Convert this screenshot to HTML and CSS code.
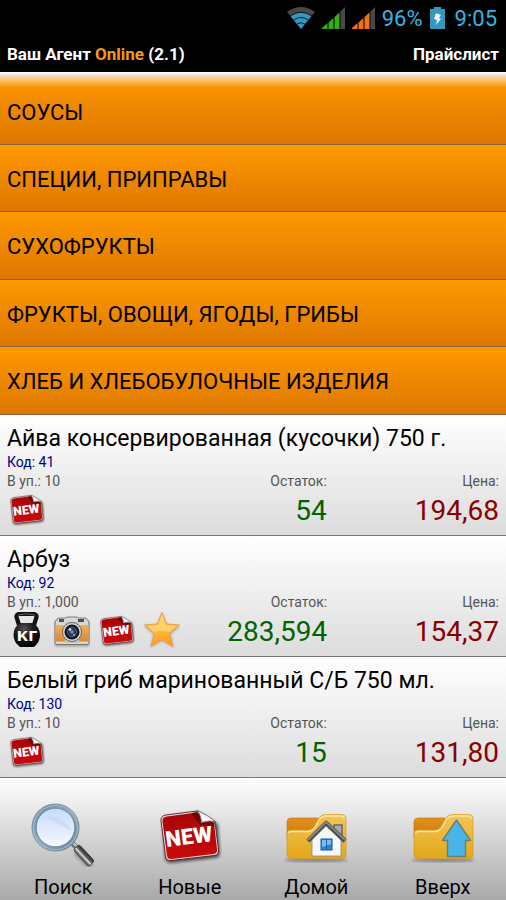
FILE: index.html
```html
<!DOCTYPE html>
<html lang="ru">
<head>
<meta charset="utf-8">
<meta name="viewport" content="width=device-width, initial-scale=1">
<title>Прайслист</title>
<link rel="stylesheet" href="styles.css">
</head>
<body>
<svg class="defs" aria-hidden="true">
  <defs>
    <linearGradient id="red" x1="0" y1="0" x2="0" y2="1"><stop offset="0" stop-color="#a80508"/><stop offset="1" stop-color="#c90a0c"/></linearGradient>
    <linearGradient id="peel" x1="0" y1="1" x2="1" y2="0"><stop offset="0" stop-color="#8d8d8d"/><stop offset=".35" stop-color="#fff"/><stop offset="1" stop-color="#aaa"/></linearGradient>
    <linearGradient id="gold" x1="0" y1="0" x2="0" y2="1"><stop offset="0" stop-color="#f4c557"/><stop offset="1" stop-color="#e3a618"/></linearGradient>
    <linearGradient id="tab" x1="0" y1="0" x2="0" y2="1"><stop offset="0" stop-color="#e0921f"/><stop offset="1" stop-color="#cf7608"/></linearGradient>
    <linearGradient id="starfill" x1="0" y1="0" x2="0" y2="1"><stop offset="0" stop-color="#ffd45c"/><stop offset="1" stop-color="#ff9c1c"/></linearGradient>
    <linearGradient id="ring" x1="0" y1="0" x2="1" y2="1"><stop offset="0" stop-color="#6e8da2"/><stop offset=".5" stop-color="#8fa8b8"/><stop offset="1" stop-color="#6a8191"/></linearGradient>
    <linearGradient id="glass" x1="0" y1="0" x2="0" y2="1"><stop offset="0" stop-color="#c3d9f9"/><stop offset=".5" stop-color="#dfe9fe"/><stop offset="1" stop-color="#f8faff"/></linearGradient>
    <linearGradient id="grip" x1="0" y1="0" x2="0" y2="1"><stop offset="0" stop-color="#2b2b2b"/><stop offset=".45" stop-color="#666"/><stop offset=".6" stop-color="#ddd"/><stop offset="1" stop-color="#444"/></linearGradient>
    <linearGradient id="leather" x1="0" y1="0" x2="0" y2="1"><stop offset="0" stop-color="#f0ad59"/><stop offset="1" stop-color="#d88a35"/></linearGradient>
    <radialGradient id="iron" cx=".4" cy=".25" r=".7"><stop offset="0" stop-color="#555"/><stop offset=".5" stop-color="#1c1c1c"/><stop offset="1" stop-color="#050505"/></radialGradient>
    <radialGradient id="lens"><stop offset="0" stop-color="#8aa6cc"/><stop offset=".35" stop-color="#273a5e"/><stop offset="1" stop-color="#0b0d15"/></radialGradient>
    <filter id="soft" x="-20%" y="-20%" width="140%" height="140%"><feGaussianBlur stdDeviation="1.6"/></filter>
  </defs>
  <symbol id="i-new" viewBox="0 0 64 64">
    <path d="M8 13 L41 9 L60 21 L62 50 Q62 54 58 55 L14 60 Q8 60 7 56 L4 18Z" fill="#000" opacity=".6" filter="url(#soft)"/>
    <path d="M8 12 L39 8 L57 19 L60.500 47 Q61 52 56 52.500 L13 57.500 Q8 58 7.500 53 L3 18 Q2.500 12.500 8 12Z" fill="#e8d5d5" stroke="#4a1010" stroke-width=".8"/>
    <path d="M9 13.500 L39 9.500 L56 20 L59 46.500 Q59.500 50.500 55.500 51 L13.500 56 Q9.500 56.500 9 52.500 L4.500 18.500 Q4 14 9 13.500Z" fill="url(#red)"/>
    <path d="M33 10.500 L39 8 L46 20 L57 19 L56 24 L42 22Z" fill="#400" opacity=".55"/>
    <text class="new-text" x="31" y="41" text-anchor="middle" transform="rotate(-7 32 34)">NEW</text>
    <path d="M39.500 7.500 Q44 15 43 20 Q50 17 57.500 18.500 Q50 12 39.500 7.500Z" fill="url(#peel)" stroke="#555" stroke-width=".7"/>
  </symbol>
  <symbol id="i-folder" viewBox="0 0 64 64">
    <ellipse cx="32" cy="57" rx="32" ry="2" fill="#000" opacity=".35" filter="url(#soft)"/>
    <path d="M3 19 Q3 15 7 15 L34 15 L34 35 L3 35Z" fill="url(#tab)" stroke="#bd7412" stroke-width=".6"/>
    <path d="M3 30 Q3 27 7 27 L24 27 Q28 27 31 22 L34 16 Q37 11.500 42 11.500 L57 11.500 Q62 11.500 62 16 L62 51 Q62 55.500 57 55.500 L8 55.500 Q3 55.500 3 51Z" fill="url(#gold)" stroke="#d69a20" stroke-width=".7"/>
    <path d="M4.500 30 Q5 28.500 8 28.500 L24 28.500 Q29 28.500 32 23 L35 17 Q38 13 42 13 L57 13 Q60 13 60.500 16" fill="none" stroke="#fbe3a0" stroke-width="1.300"/>
  </symbol>
  <symbol id="i-search" viewBox="0 0 64 64">
    <path d="M45 49 L60 64" stroke="#000" stroke-width="6" opacity=".3" filter="url(#soft)"/>
    <path d="M39 38 L47 46" stroke="#5e7180" stroke-width="5"/>
    <path d="M40 38 L47 45" stroke="#bdcbd5" stroke-width="2"/>
    <rect x="0" y="-4" width="23" height="8" rx="2.500" fill="url(#grip)" stroke="#333" stroke-width=".7" transform="translate(45 44) rotate(47)"/>
    <circle cx="24.500" cy="24.500" r="21.500" fill="url(#glass)" stroke="url(#ring)" stroke-width="5"/>
    <circle cx="24.500" cy="24.500" r="22" fill="none" stroke="#a3bac8" stroke-width="1.200"/>
    <circle cx="24.500" cy="24.500" r="19.300" fill="none" stroke="#718aa0" stroke-width=".8"/>
    <path d="M10 16 Q20 11 30 17 T41 28 Q32 24 24 19 T10 16Z" fill="#a9c6f0" opacity=".3"/>
  </symbol>
  <symbol id="i-home" viewBox="0 0 64 64">
    <use href="#i-folder" width="64" height="64"/>
    <path d="M50 22 h8 v10 h-8z" fill="#aaa" stroke="#666" stroke-width="1.500"/>
    <path d="M28 35 L42 21 L57 35 V53 H28Z" fill="#f7f7f7" stroke="#888" stroke-width=".8"/>
    <path d="M24 38 L42 20 L61 38" fill="none" stroke="#505050" stroke-width="4.500" stroke-linejoin="round"/>
    <path d="M24 37 L42 19 L61 37" fill="none" stroke="#929292" stroke-width="1.500"/>
    <rect x="37" y="36" width="11" height="11" fill="#2c83d4" stroke="#175a9d"/>
    <path d="M38 37 h9 v4 l-9 3z" fill="#7cbdf2"/>
    <path d="M42.500 36 V47" stroke="#1b63a9"/>
  </symbol>
  <symbol id="i-up" viewBox="0 0 64 64">
    <use href="#i-folder" width="64" height="64"/>
    <path d="M45.500 17 L59.500 37.500 H54.500 V53.500 H36.500 V37.500 H31.500Z" fill="#49b5e6" stroke="#647f77" stroke-width="1.400" stroke-linejoin="round"/>
  </symbol>
  <symbol id="i-weight" viewBox="0 0 36 36">
    <path d="M10 13 L7.500 5 Q7 2 11 2 H24 Q28 2 27.500 5 L25 13" fill="none" stroke="#111" stroke-width="4.200" stroke-linejoin="round"/>
    <path d="M9 3 Q17 .5 26 3" fill="none" stroke="#777" stroke-width=".8"/>
    <path d="M11 11 H24 Q31 15 31 23 Q31 30 25 35 H11 Q4.500 30 4.500 23 Q4.500 15 11 11Z" fill="url(#iron)"/>
    <text class="kg-text" x="18" y="29" text-anchor="middle">КГ</text>
  </symbol>
  <symbol id="i-camera" viewBox="0 0 36 36">
    <path d="M1 9 H35 V34 H1Z" fill="#000" opacity=".35" filter="url(#soft)"/>
    <path d="M1 10 L4 6 H12 L13 5 H23 L24 6 H32 L35 10 V31 Q35 32.500 33 32.500 H3 Q1 32.500 1 31Z" fill="#d9d8d4" stroke="#66615a" stroke-width=".8"/>
    <rect x="1.500" y="13" width="33" height="16.500" fill="url(#leather)"/>
    <path d="M11 10 H25 V31 H11Z" fill="#c3c3c3"/>
    <rect x="5" y="7" width="5" height="3" fill="#4c5657"/><rect x="24" y="7" width="6" height="3" fill="#46504f"/>
    <circle cx="18" cy="20" r="9.500" fill="#d9d9d9" stroke="#646464"/>
    <circle cx="18" cy="20" r="7.500" fill="url(#lens)"/>
    <circle cx="18" cy="20" r="4.500" fill="none" stroke="#577599" stroke-width=".8"/>
    <circle cx="16" cy="17.500" r="1.300" fill="#dbeaff"/><circle cx="20" cy="23" r="1" fill="#d69ab9"/>
  </symbol>
  <symbol id="i-star" viewBox="0 0 36 36">
    <path d="M18 1 L22.500 13 L36 14 L26 22.500 L29.500 35 L18 28.500 L6.500 35 L10 22.500 L0 14 L13.500 13Z" fill="#000" opacity=".3" filter="url(#soft)"/>
    <path d="M18 0.500 L22.500 12 L35.500 13 L25.500 21.500 L29 34.500 L18 27.500 L7 34.500 L10.500 21.500 L.5 13 L13.500 12Z" fill="url(#starfill)" stroke="#e9a046" stroke-linejoin="round"/>
    <path d="M18 3 L21.500 13 L33 14 L25 20 Q15 17 10 21 L3 14 L14.500 13Z" fill="#ffe9a0" opacity=".45"/>
  </symbol>
</svg>

<div class="screen">
  <div class="status">
    <svg class="wifi" viewBox="0 0 28 22" aria-hidden="true">
      <path d="M14 22 L0 5 Q14 -5 28 5Z" fill="#484848"/>
      <path d="M14 22 L3.500 9 Q14 2 24.500 9Z" fill="#3398bf"/>
      <path d="M3 9 Q14 1.500 25 9 M6.500 13 Q14 8 21.500 13 M10 17 Q14 14.500 18 17" fill="none" stroke="#000" stroke-width=".8"/>
    </svg>
    <svg class="signal green" viewBox="0 0 23 22" aria-hidden="true">
      <path d="M0 22 V21 L5.500 16 V22Z M6.500 22 V15.500 L11.500 11 V22Z M12.500 22 V10 L17.500 5.500 V22Z"/>
      <path class="off" d="M18.500 22 V4.500 L23 0 V22Z"/>
    </svg>
    <svg class="signal orange" viewBox="0 0 23 22" aria-hidden="true">
      <path d="M0 22 V21 L5.500 16 V22Z M6.500 22 V15.500 L11.500 11 V22Z M12.500 22 V10 L17.500 5.500 V22Z"/>
      <path class="off" d="M18.500 22 V4.500 L23 0 V22Z"/>
    </svg>
    <span>96%</span>
    <svg class="battery" viewBox="0 0 15 22" aria-hidden="true">
      <path d="M4 0 H11 V2 H15 V22 H0 V2 H4Z" fill="#3398bf"/>
      <path d="M6 6 L11 8 L9 11 L11 12 L6 18 L7 13 L4 12Z" fill="#e9f6fb"/>
    </svg>
    <time>9:05</time>
  </div>
  <header class="titlebar">
    <h1>Ваш Агент <span class="accent">Online</span> (2.1)</h1>
    <strong>Прайслист</strong>
  </header>

  <main>
    <nav class="categories" aria-label="Категории">
      <button type="button">СОУСЫ</button>
      <button type="button">СПЕЦИИ, ПРИПРАВЫ</button>
      <button type="button">СУХОФРУКТЫ</button>
      <button type="button">ФРУКТЫ, ОВОЩИ, ЯГОДЫ, ГРИБЫ</button>
      <button type="button">ХЛЕБ И ХЛЕБОБУЛОЧНЫЕ ИЗДЕЛИЯ</button>
    </nav>

    <article class="item">
      <h2>Айва консервированная (кусочки) 750 г.</h2>
      <p class="code">Код: 41</p>
      <div class="details">
        <div class="info">
          <p>В уп.: 10</p>
          <div class="icons"><svg aria-hidden="true"><use href="#i-new"/></svg></div>
        </div>
        <dl class="stock"><dt>Остаток:</dt><dd>54</dd></dl>
        <dl class="price"><dt>Цена:</dt><dd>194,68</dd></dl>
      </div>
    </article>

    <article class="item">
      <h2>Арбуз</h2>
      <p class="code">Код: 92</p>
      <div class="details">
        <div class="info">
          <p>В уп.: 1,000</p>
          <div class="icons">
            <svg aria-hidden="true"><use href="#i-weight"/></svg>
            <svg aria-hidden="true"><use href="#i-camera"/></svg>
            <svg aria-hidden="true"><use href="#i-new"/></svg>
            <svg aria-hidden="true"><use href="#i-star"/></svg>
          </div>
        </div>
        <dl class="stock"><dt>Остаток:</dt><dd>283,594</dd></dl>
        <dl class="price"><dt>Цена:</dt><dd>154,37</dd></dl>
      </div>
    </article>

    <article class="item">
      <h2>Белый гриб маринованный С/Б 750 мл.</h2>
      <p class="code">Код: 130</p>
      <div class="details">
        <div class="info">
          <p>В уп.: 10</p>
          <div class="icons"><svg aria-hidden="true"><use href="#i-new"/></svg></div>
        </div>
        <dl class="stock"><dt>Остаток:</dt><dd>15</dd></dl>
        <dl class="price"><dt>Цена:</dt><dd>131,80</dd></dl>
      </div>
    </article>
  </main>

  <footer class="toolbar">
    <button type="button"><svg aria-hidden="true"><use href="#i-search"/></svg>Поиск</button>
    <button type="button"><svg aria-hidden="true"><use href="#i-new"/></svg>Новые</button>
    <button type="button"><svg aria-hidden="true"><use href="#i-home"/></svg>Домой</button>
    <button type="button"><svg aria-hidden="true"><use href="#i-up"/></svg>Вверх</button>
  </footer>
</div>
</body>
</html>
```
FILE: styles.css
```css
* {
  box-sizing: border-box;
}

body {
  margin: 0;
  background: #000;
  color: #000;
  font-family: Roboto, "Noto Sans", sans-serif;
}

h1, h2, p, dl, dd {
  margin: 0;
  font-weight: 400;
}

button {
  border: 0;
  margin: 0;
  color: inherit;
  font-family: inherit;
  cursor: pointer;
}

.defs {
  position: absolute;
  width: 0;
  height: 0;
}

.new-text {
  font: 900 22px Roboto, "Liberation Sans", sans-serif;
  fill: #fff;
}

.kg-text {
  font: bold 14px "DejaVu Sans", sans-serif;
  fill: #fff;
}

.screen {
  display: flex;
  flex-direction: column;
  min-height: 100vh;
}

/* Status bar */
.status {
  display: flex;
  align-items: center;
  justify-content: flex-end;
  gap: 7px;
  height: 36px;
  padding: 0 9px;
  color: #33b5e5;
  font-size: 22px;
}

.status svg {
  height: 22px;
}

.status time {
  margin-left: 3px;
}

.wifi {
  width: 28px;
}

.signal {
  width: 23px;
}

.green {
  fill: #35ae14;
}

.orange {
  fill: #f0701c;
}

.signal .off {
  fill: #484848;
}

.battery {
  width: 15px;
}

/* Title bar */
.titlebar {
  display: flex;
  align-items: center;
  justify-content: space-between;
  height: 36px;
  padding: 0 7px;
  color: #fff;
  font-size: 17px;
}

.titlebar h1,
.titlebar strong {
  font-size: inherit;
  font-weight: 700;
}

.accent {
  color: #f7981d;
}

/* Categories */
.categories {
  display: flex;
  flex-direction: column;
}

.categories button {
  height: 68px;
  padding: 2px 7px 0;
  border-bottom: 1px solid #85653c;
  background: linear-gradient(#ff9900, #dd7700);
  font-size: 22px;
  text-align: left;
}

.categories button:nth-child(even) {
  height: 67px;
}

.categories button:first-child {
  height: 73px;
  padding-top: 8px;
  background:
    linear-gradient(#fff 0, #f0d8c4 4px, rgba(255, 205, 130, 0.8) 8px, rgba(255, 153, 0, 0) 16px),
    linear-gradient(#ff9900, #dd7700);
}

/* Products */
.item {
  height: 121px;
  padding: 9px 7px 0;
  border-bottom: 1px solid #777;
  background: linear-gradient(#fff, #dcdcdc);
}

.item h2 {
  font-size: 23px;
  line-height: 29px;
}

.item p,
.item dt {
  color: #555;
  font-size: 14px;
  line-height: 19px;
}

.item .code {
  color: #00008b;
}

.details {
  display: grid;
  grid-template-columns: 35fr 30fr 35fr;
}

.icons {
  display: flex;
  gap: 9px;
  padding-left: 2px;
}

.icons svg {
  flex: none;
  width: 36px;
  height: 36px;
}

.item dl {
  text-align: right;
}

.item dd {
  font-size: 28px;
  line-height: 40px;
}

.stock dd {
  color: #006400;
}

.price dd {
  color: #8b0000;
}

/* Bottom toolbar */
.toolbar {
  display: grid;
  flex: 1;
  grid-template-columns: repeat(4, 1fr);
  background: linear-gradient(#fff, #a9a9a9);
}

.toolbar button {
  display: flex;
  flex-direction: column;
  align-items: center;
  gap: 8px;
  padding: 25px 0 0;
  background: none;
  font-size: 20px;
  line-height: 24px;
}

.toolbar svg {
  width: 64px;
  height: 64px;
}
```
